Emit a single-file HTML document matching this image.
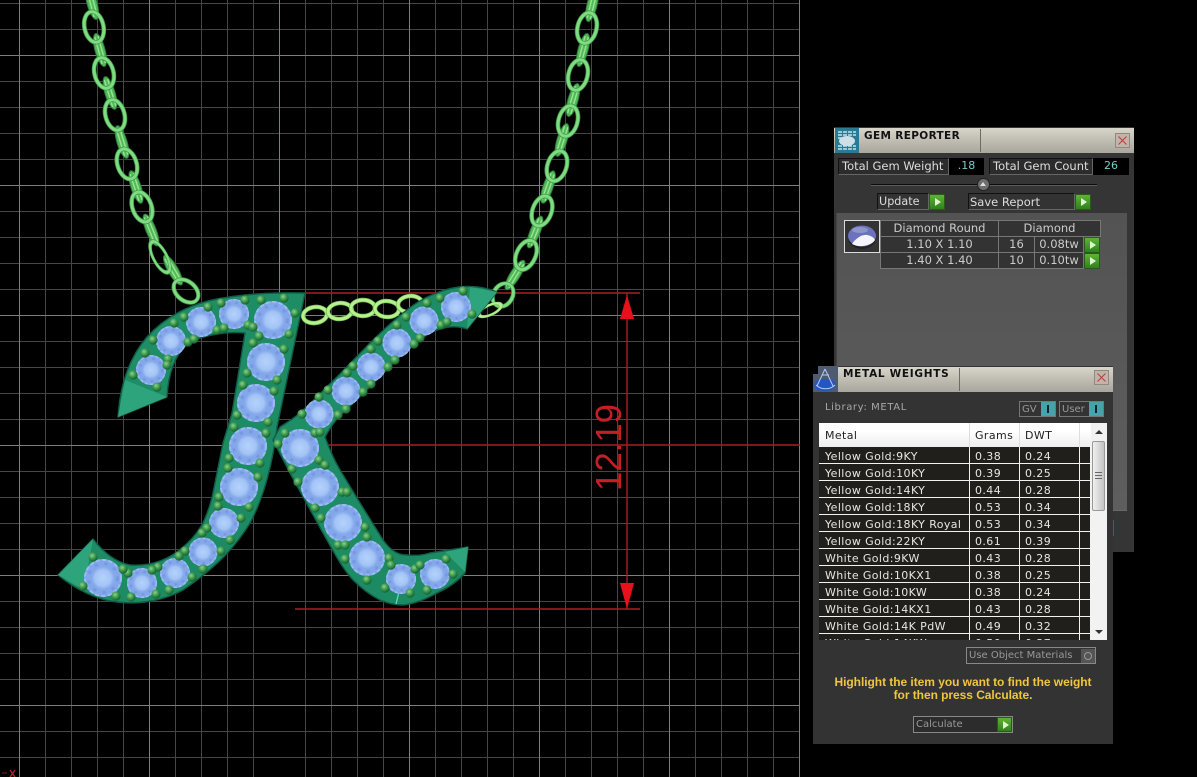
<!DOCTYPE html>
<html><head><meta charset="utf-8"><style>
html,body{margin:0;padding:0;background:#000;width:1197px;height:777px;overflow:hidden}
#r{position:relative;width:1197px;height:777px;overflow:hidden;font-family:"DejaVu Sans","Liberation Sans",sans-serif}
.a{position:absolute;box-sizing:border-box}
.t{position:absolute;white-space:nowrap;font-size:11.5px;line-height:14px}
.tb{background:linear-gradient(#d8d5cb 0%,#c4c1b7 40%,#a9a79d 100%)}
.ttl{position:absolute;font-weight:bold;font-size:10.5px;color:#111;white-space:nowrap;line-height:12px}
.x{position:absolute;width:15px;height:15px;background:#c3b4ab;border:1px solid #8e8a82;box-sizing:border-box}
.box{position:absolute;box-sizing:border-box;background:#2c2c2c;border:1px solid #111;border-right-color:#666;border-bottom-color:#666;color:#ddd}
.val{position:absolute;box-sizing:border-box;background:#000;color:#7cc;font-size:11px;text-align:center;line-height:16px}
.go{position:absolute;width:16px;height:16px;background:linear-gradient(#5fb236,#2f821c);box-sizing:border-box;border:1px solid #2a5a1a}
.go:after{content:"";position:absolute;left:5px;top:3px;border-left:6px solid #dff5d0;border-top:4px solid transparent;border-bottom:4px solid transparent}
.c{position:absolute;box-sizing:border-box;border:1px solid #777;background:#333;color:#ccc;text-align:center;font-size:11.5px;line-height:15px;white-space:nowrap}
.row{position:absolute;left:819px;width:271px;height:16px;background:#211f1c;border-bottom:0}
.row span{position:absolute;top:3px;color:#e6e6e2;font-size:11px;line-height:14px;white-space:nowrap;letter-spacing:.4px}
</style></head><body><div id="r">
<svg class="a" style="left:0;top:0" width="801" height="777" viewBox="0 0 801 777">
<defs>
<radialGradient id="gg" cx=".5" cy=".5" r=".5"><stop offset="0" stop-color="#b4d2fb"/><stop offset=".42" stop-color="#a4c4f6"/><stop offset=".6" stop-color="#84a8ea"/><stop offset="1" stop-color="#80a6ea"/></radialGradient>
<radialGradient id="bd" cx=".4" cy=".35" r=".65"><stop offset="0" stop-color="#8fd090"/><stop offset=".5" stop-color="#3f9c4e"/><stop offset="1" stop-color="#14602e"/></radialGradient>
<linearGradient id="body" x1="0" y1="0" x2="1" y2="1"><stop offset="0" stop-color="#20906a"/><stop offset="1" stop-color="#1b8860"/></linearGradient>
<g id="gem"><circle r="1" fill="url(#gg)"/><circle r=".76" fill="none" stroke="#6a88d6" stroke-width=".15" stroke-dasharray=".18 .34" opacity=".45"/><circle r=".95" fill="none" stroke="#9dbcf2" stroke-width=".1" stroke-dasharray=".22 .12"/></g>
<circle id="b" r="4.6" fill="url(#bd)"/>
<g id="bl"><ellipse rx="9.5" ry="15.5" fill="none" stroke="#3f9a4a" stroke-width="4.6"/><ellipse rx="9.5" ry="15.5" fill="none" stroke="#80dc80" stroke-width="3"/></g>
<g id="sl"><ellipse rx="5" ry="17" fill="#54b85a" stroke="#2d7d3a" stroke-width="1"/><path d="M-1.6-14V14M1.8-14V14" stroke="#94e690" stroke-width="1.4" fill="none"/></g>
<g id="hl"><ellipse rx="12" ry="8" fill="none" stroke="#6ebb55" stroke-width="4.4"/><ellipse rx="12" ry="8" fill="none" stroke="#b8f08e" stroke-width="3"/></g>
</defs>
<g stroke="#474545" stroke-width="1" shape-rendering="crispEdges">
<path d="M45.5 0V777M71.5 0V777M97.5 0V777M123.5 0V777M175.5 0V777M201.5 0V777M227.5 0V777M253.5 0V777M305.5 0V777M331.5 0V777M357.5 0V777M383.5 0V777M435.5 0V777M461.5 0V777M487.5 0V777M513.5 0V777M565.5 0V777M591.5 0V777M617.5 0V777M643.5 0V777M695.5 0V777M721.5 0V777M747.5 0V777M773.5 0V777"/>
<path d="M0 3.5H800M0 29.5H800M0 81.5H800M0 107.5H800M0 133.5H800M0 159.5H800M0 211.5H800M0 237.5H800M0 263.5H800M0 289.5H800M0 341.5H800M0 367.5H800M0 393.5H800M0 419.5H800M0 471.5H800M0 497.5H800M0 523.5H800M0 549.5H800M0 601.5H800M0 627.5H800M0 653.5H800M0 679.5H800M0 731.5H800M0 757.5H800"/>
</g>
<g stroke="#7e7c7c" stroke-width="1" shape-rendering="crispEdges">
<path d="M19.5 0V777M149.5 0V777M409.5 0V777M539.5 0V777M669.5 0V777M799.5 0V777"/>
<path d="M0 55.5H800M0 185.5H800M0 315.5H800M0 445.5H300M0 575.5H800M0 705.5H800"/>
</g>
<path d="M279.5 0V293" stroke="#4f8ea3" stroke-width="1"/>
<g stroke="#a81e22" stroke-width="1.4" fill="none"><path d="M305 293H640M295 609H640M322 445H800M627 293V609"/></g>
<path d="M627 295L620 319H634ZM627 609L620 583H634Z" fill="#e8101a"/>
<text transform="translate(621,491) rotate(-90)" font-family="Liberation Sans" font-size="36" fill="#c42024" textLength="87" lengthAdjust="spacingAndGlyphs">12.19</text>

<g style="filter:blur(.35px)">
<use href="#sl" transform="translate(92 3) rotate(-15)"/><use href="#sl" transform="translate(100 50) rotate(-15)"/><use href="#sl" transform="translate(110 93) rotate(-17)"/><use href="#sl" transform="translate(122 142) rotate(-17)"/><use href="#sl" transform="translate(136 187) rotate(-18)"/><use href="#sl" transform="translate(151 230) rotate(-22)"/><use href="#sl" transform="translate(173 270) rotate(-30)"/>
<use href="#bl" transform="translate(94 27) rotate(-12)"/><use href="#bl" transform="translate(104 73) rotate(-14)"/><use href="#bl" transform="translate(115 115) rotate(-15)"/><use href="#bl" transform="translate(127 164) rotate(-18)"/><use href="#bl" transform="translate(142 207) rotate(-20)"/>
<use href="#bl" transform="translate(160 257) rotate(-28) scale(.7 1.1)"/>
<use href="#bl" transform="translate(186 291) rotate(-50) scale(1 .9)"/>
<use href="#sl" transform="translate(592 5) rotate(14)"/><use href="#sl" transform="translate(583 50) rotate(15)"/><use href="#sl" transform="translate(573 100) rotate(16)"/><use href="#sl" transform="translate(562 140) rotate(17)"/><use href="#sl" transform="translate(548 187) rotate(19)"/><use href="#sl" transform="translate(535 232) rotate(22)"/><use href="#sl" transform="translate(515 275) rotate(32)"/>
<use href="#bl" transform="translate(587 28) rotate(13)"/><use href="#bl" transform="translate(578 75) rotate(14)"/><use href="#bl" transform="translate(568 121) rotate(15)"/><use href="#bl" transform="translate(557 166) rotate(18)"/><use href="#bl" transform="translate(542 211) rotate(20)"/><use href="#bl" transform="translate(526 255) rotate(25)"/>
<use href="#bl" transform="translate(503 295) rotate(32) scale(1 .8)"/>
<use href="#hl" transform="translate(315 315) rotate(-8)"/><use href="#hl" transform="translate(340 311) rotate(-5)"/><use href="#hl" transform="translate(363 308)"/><use href="#hl" transform="translate(387 309) rotate(3)"/><use href="#hl" transform="translate(410 304) rotate(-6)"/>
<use href="#hl" transform="translate(490 310) rotate(-25) scale(1 .6)"/>

<path fill="url(#body)" stroke="#0f5c48" stroke-width="1.4" stroke-linejoin="round" d="M118 417C120 385 129 358 147 337C165 317 190 304 217 299C240 295 265 292 305 293L277 427C273 462 264 497 250 523C236 546 217 567 183 590C165 600 140 605 117 602C98 600 76 590 58 575L93 539C103 552 115 562 130 565C145 566 165 563 183 547C195 537 200 528 203 523C208 512 211 503 213 493L223 443L232 413L245 333C225 331 200 336 190 343C175 352 168 375 167 397Z"/>
<path fill="url(#body)" stroke="#0f5c48" stroke-width="1.4" stroke-linejoin="round" d="M273 440L280 427C288 422 296 417 303 410C315 400 325 388 337 377L370 343C382 331 392 322 403 313C414 304 425 297 437 293C455 285 478 284 497 292L467 329C455 325 442 327 430 333C420 339 412 346 403 353L370 387L343 413C335 420 330 428 325 437C329 448 334 460 340 470L360 503L383 540C391 551 398 555 407 555C417 556 424 555 430 553L468 547L465 573C457 582 448 588 437 593C426 599 415 604 403 605C394 605 387 603 380 600C370 595 361 588 353 580C342 568 332 549 323 533L290 473Z"/>
<path fill="#2ea47c" d="M118 417L125 380 167 397ZM58 575L93 539 84 590ZM468 547L465 572 445 552ZM497 292L467 329 470 287Z"/>
<g stroke="#5fe0c8" stroke-width="1.2"><path d="M396 604L399 592M325 527L331 523M323 495L328 492M360 545L364 541"/></g>
<g>
<use href="#gem" transform="translate(151 370) scale(15)"/><use href="#gem" transform="translate(171 341) scale(15)"/><use href="#gem" transform="translate(201 322) scale(15)"/><use href="#gem" transform="translate(234 314) scale(15)"/><use href="#gem" transform="translate(273 320) scale(19)"/><use href="#gem" transform="translate(266 362) scale(19)"/><use href="#gem" transform="translate(256 403) scale(19)"/><use href="#gem" transform="translate(248 446) scale(19)"/><use href="#gem" transform="translate(239 487) scale(19)"/><use href="#gem" transform="translate(224 523) scale(15)"/><use href="#gem" transform="translate(203 552) scale(14.5)"/><use href="#gem" transform="translate(175 573) scale(15)"/><use href="#gem" transform="translate(142 583) scale(15)"/><use href="#gem" transform="translate(103 578) scale(19)"/>
<use href="#gem" transform="translate(300 448) scale(19)"/><use href="#gem" transform="translate(320 487) scale(19)"/><use href="#gem" transform="translate(343 523) scale(19)"/><use href="#gem" transform="translate(367 558) scale(18)"/><use href="#gem" transform="translate(401 579) scale(15)"/><use href="#gem" transform="translate(435 574) scale(15)"/><use href="#gem" transform="translate(319 414) scale(14.5)"/><use href="#gem" transform="translate(346 391) scale(14.5)"/><use href="#gem" transform="translate(371 367) scale(14.5)"/><use href="#gem" transform="translate(397 343) scale(14.5)"/><use href="#gem" transform="translate(424 321) scale(14.5)"/><use href="#gem" transform="translate(456 307) scale(15)"/>
</g>
<g>
<use href="#b" x="133" y="375"/><use href="#b" x="157" y="387"/><use href="#b" x="145" y="353"/><use href="#b" x="168" y="359"/><use href="#b" x="167" y="365"/><use href="#b" x="153" y="340"/><use href="#b" x="174" y="323"/><use href="#b" x="188" y="342"/><use href="#b" x="194" y="339"/><use href="#b" x="184" y="317"/><use href="#b" x="208" y="307"/><use href="#b" x="217" y="330"/><use href="#b" x="224" y="328"/><use href="#b" x="221" y="303"/><use href="#b" x="245" y="300"/><use href="#b" x="248" y="325"/><use href="#b" x="253" y="327"/><use href="#b" x="261" y="300"/><use href="#b" x="259" y="336"/><use href="#b" x="253" y="343"/><use href="#b" x="284" y="298"/><use href="#b" x="295" y="313"/><use href="#b" x="289" y="334"/><use href="#b" x="284" y="349"/><use href="#b" x="247" y="373"/><use href="#b" x="277" y="380"/><use href="#b" x="243" y="385"/><use href="#b" x="274" y="391"/><use href="#b" x="237" y="415"/><use href="#b" x="268" y="422"/><use href="#b" x="234" y="427"/><use href="#b" x="266" y="433"/><use href="#b" x="229" y="458"/><use href="#b" x="260" y="463"/><use href="#b" x="228" y="468"/><use href="#b" x="258" y="477"/><use href="#b" x="219" y="497"/><use href="#b" x="249" y="507"/><use href="#b" x="218" y="506"/><use href="#b" x="241" y="518"/><use href="#b" x="207" y="528"/><use href="#b" x="230" y="540"/><use href="#b" x="202" y="533"/><use href="#b" x="221" y="551"/><use href="#b" x="185" y="551"/><use href="#b" x="203" y="569"/><use href="#b" x="179" y="556"/><use href="#b" x="192" y="577"/><use href="#b" x="158" y="567"/><use href="#b" x="169" y="590"/><use href="#b" x="152" y="570"/><use href="#b" x="156" y="594"/><use href="#b" x="128" y="573"/><use href="#b" x="131" y="597"/><use href="#b" x="123" y="569"/><use href="#b" x="116" y="596"/><use href="#b" x="93" y="557"/><use href="#b" x="83" y="586"/>
<use href="#b" x="278" y="444"/><use href="#b" x="285" y="433"/><use href="#b" x="292" y="469"/><use href="#b" x="315" y="433"/><use href="#b" x="320" y="432"/><use href="#b" x="319" y="460"/><use href="#b" x="325" y="465"/><use href="#b" x="298" y="482"/><use href="#b" x="342" y="492"/><use href="#b" x="315" y="508"/><use href="#b" x="347" y="492"/><use href="#b" x="321" y="518"/><use href="#b" x="338" y="545"/><use href="#b" x="345" y="559"/>
<use href="#b" x="338" y="415"/><use href="#b" x="302" y="414"/><use href="#b" x="319" y="397"/><use href="#b" x="346" y="409"/><use href="#b" x="328" y="390"/><use href="#b" x="363" y="392"/><use href="#b" x="347" y="373"/><use href="#b" x="371" y="384"/><use href="#b" x="353" y="366"/><use href="#b" x="388" y="367"/><use href="#b" x="371" y="349"/><use href="#b" x="395" y="360"/><use href="#b" x="378" y="341"/><use href="#b" x="414" y="344"/><use href="#b" x="397" y="325"/><use href="#b" x="420" y="338"/><use href="#b" x="406" y="317"/><use href="#b" x="441" y="325"/><use href="#b" x="427" y="303"/><use href="#b" x="447" y="322"/><use href="#b" x="440" y="298"/><use href="#b" x="472" y="314"/><use href="#b" x="463" y="291"/>
<use href="#b" x="345" y="545"/><use href="#b" x="367" y="580"/><use href="#b" x="385" y="588"/><use href="#b" x="389" y="558"/><use href="#b" x="391" y="565"/><use href="#b" x="410" y="593"/><use href="#b" x="415" y="569"/><use href="#b" x="420" y="565"/><use href="#b" x="427" y="590"/><use href="#b" x="446" y="559"/><use href="#b" x="453" y="574"/><use href="#b" x="365" y="527"/><use href="#b" x="367" y="537"/>
</g>
</g>
<path d="M2 773H7" stroke="#7a1a1e"/><path d="M10 770L15 777M15 770L10 777" stroke="#a0282c" stroke-width="1.5"/>
</svg>

<!-- GEM REPORTER -->
<div class="a" style="left:834px;top:127px;width:300px;height:425px;background:#353535"></div>
<div class="a" style="left:836px;top:213px;width:291px;height:298px;background:linear-gradient(#535353,#5e5e5e);border-left:1px solid #444;border-bottom:1px solid #6a6a6a"></div>
<div class="a tb" style="left:834px;top:128px;width:300px;height:25px"></div>
<div class="a" style="left:980px;top:129px;width:1px;height:23px;background:#6d6b64"></div>
<svg class="a" style="left:835px;top:128px" width="24" height="25" viewBox="0 0 24 25"><rect width="24" height="25" fill="#2c7a92"/><path d="M3 4H21M3 7H21M3 10H9M3 18H21M3 21H21" stroke="#bfe4ee" stroke-width="1.4" stroke-dasharray="4 1"/><ellipse cx="12" cy="13" rx="8" ry="5" fill="#cfdfe6"/></svg>
<div class="ttl" style="left:864px;top:130px;letter-spacing:.35px">GEM REPORTER</div>
<div class="x" style="left:1115px;top:133px"><svg width="13" height="13" style="display:block"><path d="M2.5 2.5L10.5 10.5M10.5 2.5L2.5 10.5" stroke="#b4443c" stroke-width="1.1"/></svg></div>

<div class="box t" style="left:838px;top:158px;width:111px;height:17px;padding-left:3px;line-height:15px;font-size:11.5px">Total Gem Weight</div>
<div class="val" style="left:949px;top:158px;width:35px;height:17px">.18</div>
<div class="box t" style="left:989px;top:158px;width:104px;height:17px;padding-left:3px;line-height:15px;font-size:11.5px">Total Gem Count</div>
<div class="val" style="left:1093px;top:158px;width:36px;height:17px">26</div>
<div class="a" style="left:871px;top:184px;width:226px;height:1px;background:#0c0c0c"></div>
<div class="a" style="left:871px;top:185px;width:226px;height:1px;background:#5c5c5c"></div>
<div class="a" style="left:977px;top:178px;width:13px;height:13px;border-radius:50%;background:#6e6e6e;border:1px solid #222"></div>
<div class="a" style="left:980px;top:182px;border-bottom:4px solid #ddd;border-left:3.5px solid transparent;border-right:3.5px solid transparent"></div>
<div class="box t" style="left:877px;top:193px;width:52px;height:17px;padding-left:1px;line-height:16px;font-size:11.2px;background:#333">Update</div>
<div class="go" style="left:929px;top:194px"></div>
<div class="box t" style="left:968px;top:193px;width:107px;height:17px;padding-left:1px;line-height:16px;font-size:11.5px;background:#333">Save Report</div>
<div class="go" style="left:1075px;top:194px"></div>

<div class="a" style="left:844px;top:220px;width:36px;height:33px;background:#333;border:1px solid #ddd"></div>
<svg class="a" style="left:847px;top:224px" width="30" height="26" viewBox="0 0 30 26"><ellipse cx="15" cy="14" rx="14" ry="11" fill="#222"/><ellipse cx="15" cy="12" rx="14" ry="10.5" fill="#6c72bc"/><path d="M5 20C8 15 15 10 20 11 25 12 27 14 28 16 24 22 12 24 5 20Z" fill="#f4f4fa"/><ellipse cx="13" cy="6" rx="8" ry="3" fill="#8f94cf"/></svg>
<div class="c" style="left:880px;top:220px;width:119px;height:17px">Diamond Round</div>
<div class="c" style="left:998px;top:220px;width:103px;height:17px">Diamond</div>
<div class="c" style="left:880px;top:236px;width:119px;height:17px">1.10 X 1.10</div>
<div class="c" style="left:998px;top:236px;width:37px;height:17px">16</div>
<div class="c" style="left:1034px;top:236px;width:50px;height:17px">0.08tw</div>
<div class="go" style="left:1084px;top:237px;height:16px"></div>
<div class="c" style="left:880px;top:252px;width:119px;height:17px">1.40 X 1.40</div>
<div class="c" style="left:998px;top:252px;width:37px;height:17px">10</div>
<div class="c" style="left:1034px;top:252px;width:50px;height:17px">0.10tw</div>
<div class="go" style="left:1084px;top:253px;height:16px"></div>
<div class="a" style="left:1113px;top:520px;width:1px;height:16px;background:#3f6a35"></div>

<!-- METAL WEIGHTS -->
<div class="a" style="left:813px;top:366px;width:300px;height:378px;background:#333"></div>
<div class="a tb" style="left:813px;top:367px;width:300px;height:25px"></div>
<div class="a" style="left:959px;top:368px;width:1px;height:23px;background:#6d6b64"></div>
<svg class="a" style="left:813px;top:366px" width="25" height="26" viewBox="0 0 25 26"><rect width="25" height="26" fill="#4d5a70"/><rect width="5" height="8" fill="#000"/><ellipse cx="12" cy="19" rx="11" ry="6" fill="#2356c4"/><path d="M12 3L4 20M12 3L20 20M9 9H16M3 19C8 24 17 24 22 19" stroke="#b8c8ee" stroke-width="1" fill="none"/></svg>
<div class="ttl" style="left:843px;top:368px;letter-spacing:.7px">METAL WEIGHTS</div>
<div class="x" style="left:1094px;top:370px"><svg width="13" height="13" style="display:block"><path d="M2.5 2.5L10.5 10.5M10.5 2.5L2.5 10.5" stroke="#b4443c" stroke-width="1.1"/></svg></div>
<div class="t" style="left:825px;top:401px;color:#a8a8a8;font-size:10px;letter-spacing:.6px">Library: METAL</div>
<div class="a" style="left:1019px;top:401px;width:37px;height:16px;border:1px solid #777;color:#999;font-size:10px;line-height:15px;padding-left:2px">GV</div>
<div class="a" style="left:1041px;top:402px;width:14px;height:14px;background:#46a3ac"></div><div class="a" style="left:1047px;top:405px;width:2px;height:8px;background:#123"></div>
<div class="a" style="left:1059px;top:401px;width:45px;height:16px;border:1px solid #777;color:#999;font-size:10px;line-height:15px;padding-left:2px">User</div>
<div class="a" style="left:1089px;top:402px;width:14px;height:14px;background:#46a3ac"></div><div class="a" style="left:1095px;top:405px;width:2px;height:8px;background:#123"></div>

<div class="a" style="left:819px;top:423px;width:288px;height:217px;background:#f2f2f2;overflow:hidden">
<div class="a" style="left:0;top:0;width:272px;height:24px;background:linear-gradient(#fff 30%,#efefef)"></div>
<div class="a" style="left:0;top:24px;width:271px;height:3px;background:#44423e"></div>
<div class="a" style="left:150px;top:0;width:1px;height:24px;background:#ddd"></div>
<div class="a" style="left:200px;top:0;width:1px;height:24px;background:#ddd"></div>
<div class="a" style="left:260px;top:0;width:1px;height:24px;background:#ddd"></div>
<div class="t" style="left:6px;top:6px;color:#222;font-size:11px;letter-spacing:.4px">Metal</div>
<div class="t" style="left:156px;top:6px;color:#222;font-size:11px;letter-spacing:.4px">Grams</div>
<div class="t" style="left:206px;top:6px;color:#222;font-size:11px;letter-spacing:.4px">DWT</div>
</div>
<div style="position:absolute;left:0;top:0;width:1197px;height:640px;overflow:hidden">
<div class="row" style="top:447px"><span style="left:6px">Yellow Gold:9KY</span><span style="left:156px">0.38</span><span style="left:206px">0.24</span></div>
<div class="row" style="top:464px"><span style="left:6px">Yellow Gold:10KY</span><span style="left:156px">0.39</span><span style="left:206px">0.25</span></div>
<div class="row" style="top:481px"><span style="left:6px">Yellow Gold:14KY</span><span style="left:156px">0.44</span><span style="left:206px">0.28</span></div>
<div class="row" style="top:498px"><span style="left:6px">Yellow Gold:18KY</span><span style="left:156px">0.53</span><span style="left:206px">0.34</span></div>
<div class="row" style="top:515px"><span style="left:6px">Yellow Gold:18KY Royal</span><span style="left:156px">0.53</span><span style="left:206px">0.34</span></div>
<div class="row" style="top:532px"><span style="left:6px">Yellow Gold:22KY</span><span style="left:156px">0.61</span><span style="left:206px">0.39</span></div>
<div class="row" style="top:549px"><span style="left:6px">White Gold:9KW</span><span style="left:156px">0.43</span><span style="left:206px">0.28</span></div>
<div class="row" style="top:566px"><span style="left:6px">White Gold:10KX1</span><span style="left:156px">0.38</span><span style="left:206px">0.25</span></div>
<div class="row" style="top:583px"><span style="left:6px">White Gold:10KW</span><span style="left:156px">0.38</span><span style="left:206px">0.24</span></div>
<div class="row" style="top:600px"><span style="left:6px">White Gold:14KX1</span><span style="left:156px">0.43</span><span style="left:206px">0.28</span></div>
<div class="row" style="top:617px"><span style="left:6px">White Gold:14K PdW</span><span style="left:156px">0.49</span><span style="left:206px">0.32</span></div>
<div class="row" style="top:634px"><span style="left:6px">White Gold:14KW</span><span style="left:156px">0.50</span><span style="left:206px">0.37</span></div>
<div class="a" style="left:969px;top:447px;width:1px;height:193px;background:#f2f2f2"></div>
<div class="a" style="left:1019px;top:447px;width:1px;height:193px;background:#f2f2f2"></div>
<div class="a" style="left:1079px;top:447px;width:1px;height:193px;background:#f2f2f2"></div>
</div>
<div class="a" style="left:1092px;top:441px;width:13px;height:70px;background:linear-gradient(90deg,#f0f0f0,#c4c4c4);border:1px solid #999;border-radius:2px"></div>
<div class="a" style="left:1095px;top:472px;width:7px;height:7px;border-top:1px solid #666;border-bottom:1px solid #666"></div>
<div class="a" style="left:1095px;top:475px;width:7px;height:1px;background:#666"></div>
<div class="a" style="left:1095px;top:430px;border-bottom:4px solid #333;border-left:4px solid transparent;border-right:4px solid transparent"></div>
<div class="a" style="left:1095px;top:630px;border-top:4px solid #333;border-left:4px solid transparent;border-right:4px solid transparent"></div>

<div class="a" style="left:966px;top:647px;width:130px;height:17px;border:1px solid #888;color:#999;font-size:10px;line-height:16px;padding-left:2px;white-space:nowrap">Use Object Materials</div>
<div class="a" style="left:1081px;top:649px;width:14px;height:14px;background:#555"></div>
<div class="a" style="left:1084px;top:652px;width:8px;height:8px;border-radius:50%;border:1px solid #999"></div>
<div class="a" style="left:813px;top:676px;width:300px;text-align:center;color:#f0c63c;font-family:'Liberation Sans',sans-serif;font-weight:bold;font-size:12px;line-height:13px;letter-spacing:-.05px">Highlight the item you want to find the weight<br>for then press Calculate.</div>
<div class="a" style="left:913px;top:716px;width:100px;height:17px;border:1px solid #888;background:#2c2c2c;color:#999;font-size:10px;line-height:16px;padding-left:2px">Calculate</div>
<div class="go" style="left:997px;top:717px;height:15px;width:15px"></div>
</div></body></html>
